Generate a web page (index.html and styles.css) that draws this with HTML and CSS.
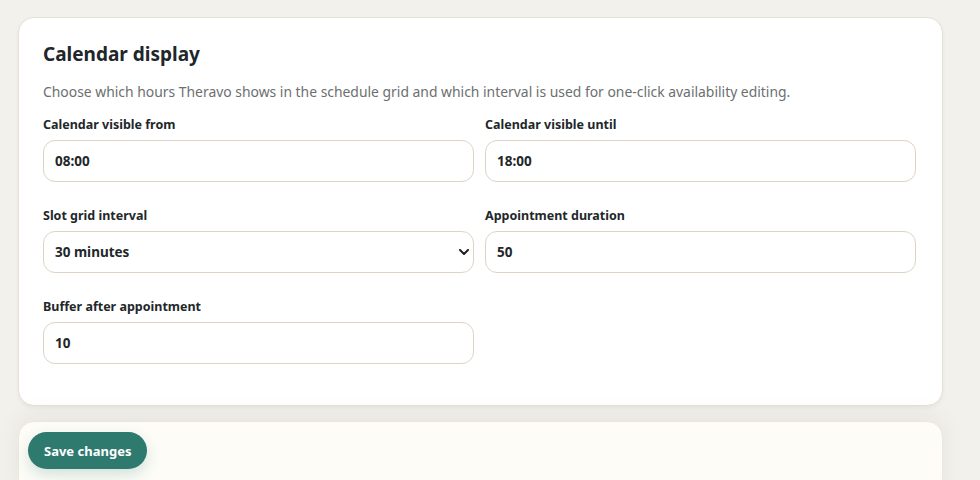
FILE: index.html
```html
<!DOCTYPE html>
<html lang="en">
<head>
<meta charset="utf-8">
<title>Calendar display</title>
<link rel="stylesheet" href="styles.css">
</head>
<body>
<main class="page">
  <section class="card">
    <h2 class="card-title">Calendar display</h2>
    <p class="card-desc">Choose which hours Theravo shows in the schedule grid and which interval is used for one-click availability editing.</p>
    <div class="form-grid">
      <label class="field">
        <span class="field-label">Calendar visible from</span>
        <input class="field-input" type="text" value="08:00">
      </label>
      <label class="field">
        <span class="field-label">Calendar visible until</span>
        <input class="field-input" type="text" value="18:00">
      </label>
      <label class="field">
        <span class="field-label">Slot grid interval</span>
        <span class="select-wrap">
          <select class="field-input field-select">
            <option>30 minutes</option>
          </select>
          <svg class="chevron" viewBox="0 0 10 6" width="10" height="6" aria-hidden="true"><path d="M1 1l4 4 4-4" fill="none" stroke="#222" stroke-width="2" stroke-linecap="round" stroke-linejoin="round"/></svg>
        </span>
      </label>
      <label class="field">
        <span class="field-label">Appointment duration</span>
        <input class="field-input" type="text" value="50">
      </label>
      <label class="field">
        <span class="field-label">Buffer after appointment</span>
        <input class="field-input" type="text" value="10">
      </label>
    </div>
  </section>
  <footer class="action-bar">
    <button class="btn-save" type="button">Save changes</button>
  </footer>
</main>
</body>
</html>
```

FILE: styles.css
```css
* { box-sizing: border-box; }
html, body { margin: 0; height: 100%; }
body {
  background: #f2f1ec;
  font-family: "Noto Sans", "Open Sans", sans-serif;
  color: #22272a;
  overflow: hidden;
}
.page {
  padding: 17px 37px 0 18px;
}
.card {
  background: #ffffff;
  border: 1px solid #e6e1d6;
  border-radius: 16px;
  padding: 22px 26px 41px 24px;
  box-shadow: 0 2px 4px rgba(60, 55, 40, 0.06);
}
.card-title {
  margin: 0;
  font-size: 19px;
  line-height: 28px;
  font-weight: 700;
  color: #20262a;
}
.card-desc {
  margin: 14px 0 0;
  font-size: 13.9px;
  line-height: 20px;
  color: #6c6f70;
}
.form-grid {
  margin-top: 15px;
  display: grid;
  grid-template-columns: 1fr 1fr;
  column-gap: 11px;
  row-gap: 26px;
}
.field {
  display: flex;
  flex-direction: column;
  gap: 7px;
}
.field-label {
  font-size: 12.5px;
  line-height: 16px;
  font-weight: 700;
  color: #22272a;
}
.field-input {
  width: 100%;
  height: 42px;
  border: 1px solid #ddd4c6;
  border-radius: 12px;
  background: #fff;
  padding: 0 11px;
  font-family: "Noto Sans", "Open Sans", sans-serif;
  font-size: 13.5px;
  font-weight: 700;
  color: #22272a;
  outline: none;
}
.select-wrap {
  position: relative;
  display: block;
}
.field-select {
  appearance: none;
  -webkit-appearance: none;
}
.chevron {
  position: absolute;
  right: 5px;
  top: 18px;
  pointer-events: none;
}
.action-bar {
  margin-top: 15px;
  background: #fdfcf7;
  border: 1px solid #ebe7dc;
  border-radius: 16px;
  height: 80px;
  padding: 10px 9px;
  box-shadow: 0 -6px 24px rgba(40, 40, 20, 0.06);
}
.btn-save {
  height: 37px;
  padding: 0 16px;
  border: none;
  border-radius: 19px;
  background: #2f7a6e;
  color: #fff;
  font-family: "Noto Sans", "Open Sans", sans-serif;
  font-size: 13px;
  font-weight: 700;
  box-shadow: 0 6px 14px rgba(47, 122, 110, 0.2);
  cursor: pointer;
}
```
